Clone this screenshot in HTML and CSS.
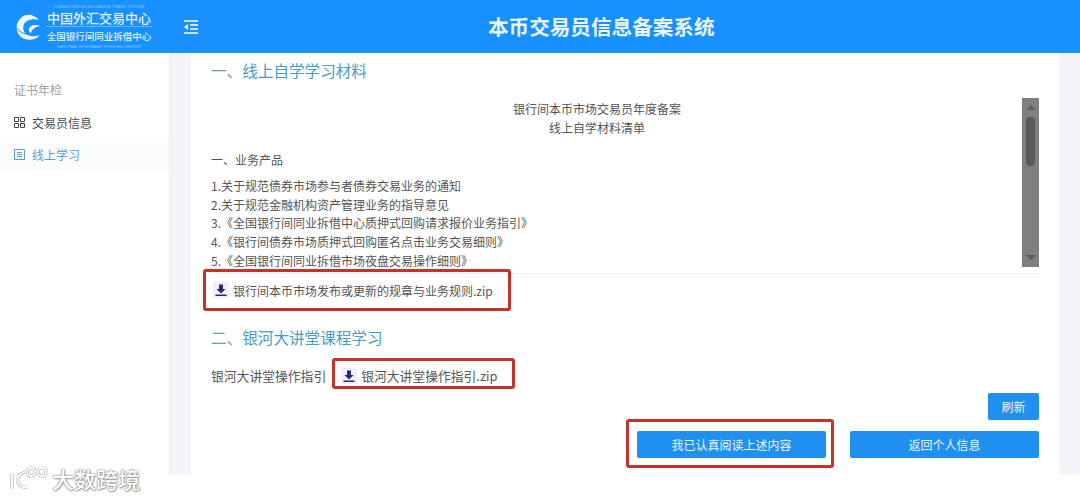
FILE: index.html
```html
<!DOCTYPE html>
<html lang="zh">
<head>
<meta charset="utf-8">
<title>本币交易员信息备案系统</title>
<link rel="stylesheet" href="styles.css">
</head>
<body>
<header class="topbar">
  <div class="brand">
    <svg class="brand-logo" viewBox="0 0 25 26" width="25" height="26"><path d="M23 6C19 1 11-1 6 3-1 8-1 18 5 23c5 4 14 4 19-2-5 2-12 2-15-2-3-4-2-10 2-12 4-2 8-2 12-1z" fill="#eef7ff"/><path d="M24 12c-4-2-8-1-10 1-2 2-1 5 1 6 0-3 4-6 9-7z" fill="#fff"/><path d="M1 14c3 5 9 7 15 6" fill="none" stroke="#1890ff" stroke-width="1"/></svg>
    <div class="brand-text">
      <div class="brand-micro">CHINA FOREIGN EXCHANGE TRADE SYSTEM</div>
      <div class="brand-cn1">中国外汇交易中心</div>
      <div class="brand-cn2">全国银行间同业拆借中心</div>
      <div class="brand-micro">NATIONAL INTERBANK FUNDING CENTER</div>
    </div>
  </div>
  <svg class="menu-icon" viewBox="0 0 14 14" width="14" height="14"><path d="M0 1h14M6 5h8M6 9h8M0 13h14" stroke="#fff" stroke-width="1.3" fill="none"/><path d="M4 4v6L0 7z" fill="#fff"/></svg>
  <h1 class="title">本币交易员信息备案系统</h1>
</header>

<div class="body-row">
  <nav class="sidebar">
    <div class="nav-group">证书年检</div>
    <div class="nav-item">
      <svg viewBox="0 0 11 11" width="11" height="11"><path d="M.5.5h4v4h-4zM6.5.5h4v4h-4zM.5 6.5h4v4h-4zM6.5 6.5h4v4h-4z" fill="none" stroke="#444" stroke-width="1"/></svg>
      <span>交易员信息</span>
    </div>
    <div class="nav-item active">
      <svg viewBox="0 0 11 11" width="11" height="11"><path d="M.5.5h10v10H.5zM3 3.5h5M3 5.5h5M3 7.5h5" fill="none" stroke="#5b9fc4" stroke-width="1"/></svg>
      <span>线上学习</span>
    </div>
  </nav>

  <main class="content">
    <section class="card">
      <h2 class="section-title"><span class="num">一、</span>线上自学学习材料</h2>

      <div class="doc-frame">
        <div class="doc">
          <p class="doc-center">银行间本币市场交易员年度备案</p>
          <p class="doc-center">线上自学材料清单</p>
          <p class="doc-heading">一、业务产品</p>
          <ol class="doc-list">
            <li>1.关于规范债券市场参与者债券交易业务的通知</li>
            <li>2.关于规范金融机构资产管理业务的指导意见</li>
            <li>3.《全国银行间同业拆借中心质押式回购请求报价业务指引》</li>
            <li>4.《银行间债券市场质押式回购匿名点击业务交易细则》</li>
            <li>5.《全国银行间同业拆借市场夜盘交易操作细则》</li>
          </ol>
        </div>
        <div class="scrollbar">
          <span class="arrow-up"></span>
          <span class="thumb"></span>
          <span class="arrow-down"></span>
        </div>
      </div>

      <div class="file-row">
        <a class="file red-box">
          <span class="file-icon"><svg viewBox="0 0 14 14" width="14" height="14"><path d="M5 1.5h4v4.5h2.6L7 10.6 2.4 6H5zM1.5 11.5h11v1.6h-11z" fill="#2a2a6a"/></svg></span>
          银行间本币市场发布或更新的规章与业务规则.zip
        </a>
      </div>

      <h2 class="section-title second"><span class="num">二、</span>银河大讲堂课程学习</h2>

      <div class="guide-row">
        <span class="guide-label">银河大讲堂操作指引</span>
        <a class="file red-box compact">
          <span class="file-icon"><svg viewBox="0 0 14 14" width="14" height="14"><path d="M5 1.5h4v4.5h2.6L7 10.6 2.4 6H5zM1.5 11.5h11v1.6h-11z" fill="#2a2a6a"/></svg></span>
          银河大讲堂操作指引.zip
        </a>
      </div>

      <div class="refresh-row"><button class="btn btn-small">刷新</button></div>
      <div class="action-row">
        <div class="red-box action-box"><button class="btn btn-wide">我已认真阅读上述内容</button></div>
        <button class="btn btn-wide btn-return">返回个人信息</button>
      </div>
    </section>
  </main>
</div>

<div class="watermark">
  <svg viewBox="0 0 40 26" width="40" height="26"><g fill="none" stroke="#b5b5b5" stroke-width="3.2"><path d="M3 8v16M16 7C10 9 8 13 9 17c1 4 5 6 9 5"/><circle cx="22" cy="7" r="4"/><circle cx="33" cy="7" r="4"/></g><g fill="none" stroke="#fff" stroke-width="1.8"><path d="M3 8v16M16 7C10 9 8 13 9 17c1 4 5 6 9 5"/><circle cx="22" cy="7" r="4"/><circle cx="33" cy="7" r="4"/></g></svg>
  <span>大数跨境</span>
</div>
</body>
</html>
```
FILE: styles.css
```css
* { box-sizing: border-box; }
html, body { margin: 0; height: 500px; overflow: hidden; background: #fff; }
body {
  position: relative;
  font-family: "Noto Sans CJK SC", "Liberation Sans", sans-serif;
  font-size: 12px;
  color: #555;
}

.topbar {
  height: 53px;
  background: #1890ff;
  display: flex;
  align-items: center;
  position: relative;
}
.brand { width: 170px; display: flex; align-items: center; padding-left: 16px; gap: 5px; flex: none; }
.brand-logo { flex: none; }
.brand-text { width: 106px; color: #e6f3ff; text-align: center; line-height: 1; }
.brand-micro { font-size: 4px; white-space: nowrap; opacity: .55; letter-spacing: .1px; line-height: 6px; font-family: "Liberation Sans", sans-serif; }
.brand-cn1 { font-size: 13px; font-weight: 500; line-height: 16px; border-bottom: 1px solid rgba(255,255,255,.35); margin-bottom: 1px; }
.brand-cn2 { font-size: 9.5px; line-height: 16px; font-weight: 500; }
.menu-icon { margin-left: 14px; flex: none; }
.title { margin: 0; position: absolute; left: 488px; top: 12px; font-size: 20.6px; line-height: 29px; color: #e9f5ff; font-weight: 700; white-space: nowrap; }

.body-row { display: flex; height: 422px; }
.sidebar { width: 170px; flex: none; background: #fff; border-right: 1px solid #eceef2; padding-top: 28px; }
.nav-group { color: #a0a0a0; padding-left: 14px; line-height: 18px; margin-bottom: 7px; }
.nav-item { display: flex; align-items: center; gap: 7px; padding-left: 14px; height: 32px; color: #4a4a4a; }
.nav-item.active { color: #5b9fc4; background: #fbfcfe; }

.content { flex: 1; background: #f3f5f9; padding: 0 21px; }
.card { background: #fff; height: 100%; padding: 8px 20px 0; }
.section-title { margin: -2px 0 0; font-size: 15.6px; font-weight: 400; line-height: 22px; color: #4a9cc4; white-space: nowrap; }
.section-title .num { color: #6f9bb0; }
.section-title.second { margin-top: 15px; }

.doc-frame { display: flex; height: 176px; margin-top: 17px; border-bottom: 1px solid #eee; padding-bottom: 6px; }
.doc { flex: 1; min-width: 0; padding: 1px 39px 0 0; color: #555; }
.doc p { margin: 0; }
.doc-center { text-align: center; line-height: 19px; }
.doc-heading { margin-top: 14px !important; line-height: 18px; }
.doc-list { list-style: none; margin: 8px -39px 0 0; padding: 0; line-height: 18.7px; }

.scrollbar { width: 17px; flex: none; background: #7f7f7f; display: flex; flex-direction: column; align-items: center; padding-top: 7px; position: relative; }
.thumb { width: 9px; height: 49px; border-radius: 4px; background: #5a5a5a; margin-top: 7px; }
.arrow-up { width: 0; height: 0; border: 5px solid transparent; border-top: 0; border-bottom-color: #5f5f5f; }
.arrow-down { position: absolute; bottom: 7px; width: 0; height: 0; border: 5px solid transparent; border-bottom: 0; border-top-color: #5a5a5a; }

.red-box { border: 3px solid #c4322b; border-radius: 3px; }
.file { display: inline-flex; align-items: center; gap: 4px; color: #555; white-space: nowrap; }
.file-icon { width: 16px; height: 16px; background: #f0eff6; display: flex; align-items: center; justify-content: center; flex: none; }
.file-row { margin: -5px 0 0 -8px; }
.file-row .file { width: 308px; height: 42px; padding-left: 7px; }
.guide-row { display: flex; align-items: center; margin-top: 10px; gap: 6px; white-space: nowrap; font-size: 12.8px; }
.guide-label { padding-top: 4px; }
.file.compact { width: 183px; height: 31px; padding: 4px 0 0 6px; }

.refresh-row { display: flex; justify-content: flex-end; margin-top: 4px; }
.btn { border: 0; border-radius: 2px; background: #1f8ff0; color: #eef7ff; font: inherit; font-size: 12px; padding: 0; }
.btn-small { width: 51px; height: 27px; }
.action-row { display: flex; justify-content: flex-end; align-items: center; gap: 16px; margin-top: -1px; }
.btn-wide { width: 189px; height: 27px; }
.btn-return { margin-top: 2px; }
.action-box { padding: 9px 5px 7px 8px; display: flex; }

.watermark { position: absolute; left: 9px; top: 465px; display: flex; align-items: center; gap: 3px; }
.watermark span { font-size: 22px; line-height: 26px; color: #fff; font-weight: 500; text-shadow: 0 0 1px #777, 0 0 2px #888, 1px 1px 2px #aaa; white-space: nowrap; }
```
